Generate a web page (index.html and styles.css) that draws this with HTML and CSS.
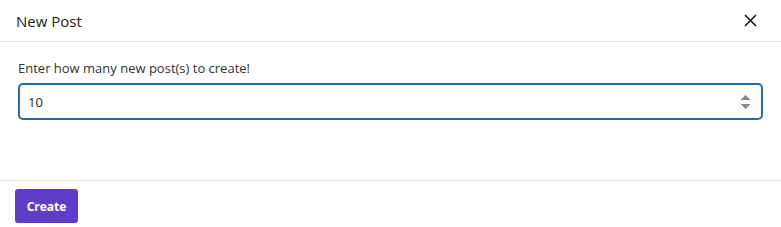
FILE: index.html
```html
<!DOCTYPE html>
<html lang="en">
<head>
  <meta charset="utf-8">
  <title>New Post</title>
  <link rel="stylesheet" href="styles.css">
</head>
<body>
  <div class="modal">
    <div class="modal-header">
      <h5 class="modal-title">New Post</h5>
      <button class="close-btn" type="button" aria-label="Close">
        <svg width="13" height="13" viewBox="0 0 13 13">
          <path d="M1 1 L12 12 M12 1 L1 12" stroke="#111" stroke-width="1.5" fill="none"/>
        </svg>
      </button>
    </div>
    <div class="modal-body">
      <label class="field-label" for="post-count">Enter how many new post(s) to create!</label>
      <input class="field-input" id="post-count" type="number" value="10" autofocus>
    </div>
    <div class="modal-footer">
      <button class="create-btn" type="button">Create</button>
    </div>
  </div>
</body>
</html>
```

FILE: styles.css
```css
html, body {
  margin: 0;
  padding: 0;
  background: #fff;
}

body {
  font-family: 'Open Sans', 'Noto Sans', sans-serif;
  color: #212529;
}

.modal {
  width: 781px;
  height: 227px;
  display: flex;
  flex-direction: column;
}

/* Header */
.modal-header {
  height: 41px;
  display: flex;
  align-items: center;
  justify-content: space-between;
  padding: 0 16px;
  border-bottom: 1px solid #e6e6e6;
}

.modal-title {
  margin: 0;
  font-size: 15px;
  font-weight: 400;
  color: #222;
}

.close-btn {
  background: none;
  border: 0;
  padding: 0;
  margin-right: 8px;
  display: flex;
  cursor: pointer;
}

/* Body */
.modal-body {
  flex: 1;
  padding: 17px 18px 0 18px;
  display: flex;
  flex-direction: column;
}

.field-label {
  font-size: 13px;
  color: #333;
  margin-bottom: 6px;
}

.field-input {
  box-sizing: border-box;
  width: 100%;
  height: 37px;
  border: 2px solid #1f6eb0;
  border-radius: 5px;
  padding: 0 8px;
  font-family: inherit;
  font-size: 13px;
  color: #222;
  outline: none;
}

/* keep the spinner visible like the focused field */
.field-input::-webkit-inner-spin-button {
  opacity: 1;
}

/* Footer */
.modal-footer {
  height: 47px;
  border-top: 1px solid #e6e6e6;
  padding: 8px 15px 0 15px;
  box-sizing: border-box;
}

.create-btn {
  width: 63px;
  height: 34px;
  background-color: #5f3dc8;
  color: #fff;
  border: 0;
  border-radius: 3px;
  font-family: inherit;
  font-size: 12px;
  font-weight: 700;
  cursor: pointer;
}
```
